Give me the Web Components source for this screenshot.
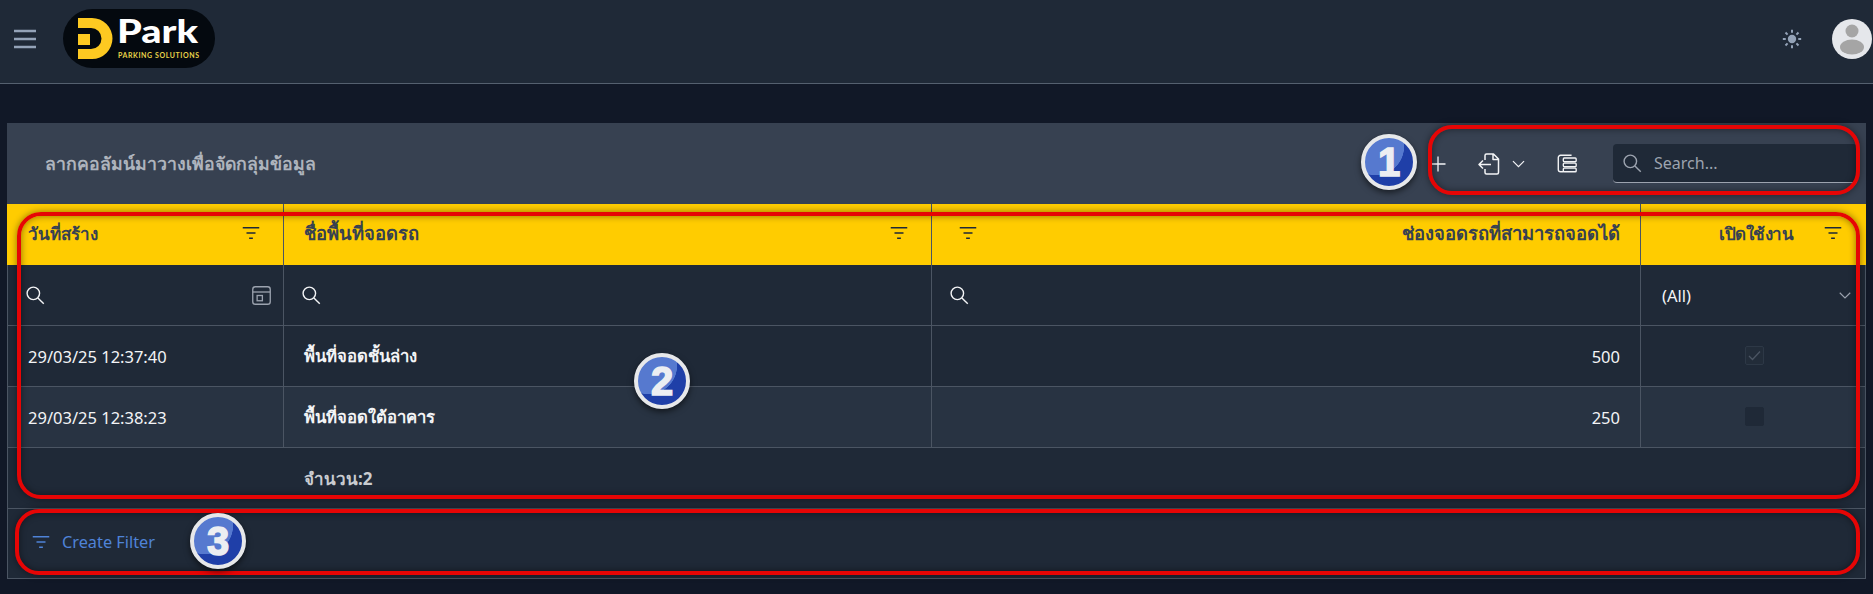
<!DOCTYPE html>
<html lang="th">
<head>
<meta charset="utf-8">
<title>DPark</title>
<style>
  html, body { margin: 0; background: #111827; }
  body {
    font-family: "Noto Sans", "Open Sans", sans-serif;
    font-size: 16.5px;
    color: #f3f4f6;
    width: 1873px;
    height: 594px;
    overflow: hidden;
    position: relative;
  }
  main { display: block; padding: 39px 7px 0; }
  b { font-size: 16.7px; }
  b.total { font-size: 17px; color: #c9ccd1; }
  .search { margin-left: -3px; }
  .wide { font-size: 18.4px; }
  .narrow { font-size: 17px; letter-spacing: -0.5px; }
</style>
</head>
<body>
<app-header></app-header>
<main>
  <grid-panel>
    <grid-toolbar></grid-toolbar>
    <grid-row kind="head">
      <grid-cell kind="head"><span>วันที่สร้าง</span><ui-icon name="filter" slot="end"></ui-icon></grid-cell>
      <grid-cell kind="head"><span class="wide">ชื่อพื้นที่จอดรถ</span><ui-icon name="filter" slot="end"></ui-icon></grid-cell>
      <grid-cell kind="head" style="padding-left:27px;padding-right:20px"><ui-icon name="filter"></ui-icon><span class="wide" slot="end">ช่องจอดรถที่สามารถจอดได้</span></grid-cell>
      <grid-cell kind="head" align="end"><span class="narrow">เปิดใช้งาน</span><ui-icon name="filter" slot="end"></ui-icon></grid-cell>
    </grid-row>
    <grid-row>
      <grid-cell style="padding-right:11px"><ui-icon class="search" name="search"></ui-icon><ui-icon name="calendar" slot="end" style="color:#9ca3af"></ui-icon></grid-cell>
      <grid-cell><ui-icon class="search" name="search"></ui-icon></grid-cell>
      <grid-cell><ui-icon class="search" name="search"></ui-icon></grid-cell>
      <grid-cell style="padding-right:12px"><span>(All)</span><ui-icon name="chevron" size="18" slot="end" style="color:#9ca3af"></ui-icon></grid-cell>
    </grid-row>
    <grid-row>
      <grid-cell>29/03/25 12:37:40</grid-cell>
      <grid-cell><b>พื้นที่จอดชั้นล่าง</b></grid-cell>
      <grid-cell align="end">500</grid-cell>
      <grid-cell align="center"><grid-check checked></grid-check></grid-cell>
    </grid-row>
    <grid-row alt>
      <grid-cell>29/03/25 12:38:23</grid-cell>
      <grid-cell><b>พื้นที่จอดใต้อาคาร</b></grid-cell>
      <grid-cell align="end">250</grid-cell>
      <grid-cell align="center"><grid-check></grid-check></grid-cell>
    </grid-row>
    <grid-row kind="foot">
      <grid-cell plain></grid-cell>
      <grid-cell plain><b class="total">จำนวน:2</b></grid-cell>
      <grid-cell plain></grid-cell>
      <grid-cell plain></grid-cell>
    </grid-row>
    <filter-bar></filter-bar>
  </grid-panel>
</main>

<mark-box style="left:1428px;top:125px;width:432px;height:70px"></mark-box>
<mark-box style="left:17px;top:212px;width:1843px;height:287px"></mark-box>
<mark-box style="left:15px;top:509px;width:1845px;height:66px"></mark-box>
<num-badge style="left:1361px;top:134px">1</num-badge>
<num-badge style="left:634px;top:353px">2</num-badge>
<num-badge style="left:190px;top:513px">3</num-badge>

<script>
const ICONS = {
  menu: '<path d="M0 4h22M0 12h22M0 20h22" stroke="#94a3b8" stroke-width="2.4" fill="none"/>',
  plus: '<path d="M12 3v18M3 12h18" stroke="#f3f4f6" stroke-width="1.6" fill="none"/>',
  exportFile: '<path d="M8 8V3.500a1.500 1.500 0 0 1 1.500-1.500h7l5 5v13.500a1.500 1.500 0 0 1-1.500 1.500h-10.500a1.500 1.500 0 0 1-1.500-1.500v-3.500M16 2v5.500h5.500M14 12.500h-12M6 8.500l-4 4 4 4" stroke="#f3f4f6" stroke-width="1.500" fill="none" stroke-linejoin="round"/>',
  chevron: '<path d="M5 9l7 7 7-7" stroke="currentColor" stroke-width="1.500" fill="none"/>',
  chooser: '<path d="M17 2.500H5a2.500 2.500 0 0 0-2.500 2.500v13a2.500 2.500 0 0 0 2.500 2.500h3" stroke="#f3f4f6" stroke-width="1.500" fill="none"/><rect x="8" y="5.500" width="14" height="4" rx="1" stroke="#f3f4f6" stroke-width="1.500" fill="none"/><rect x="8" y="11" width="14" height="4" rx="1" stroke="#f3f4f6" stroke-width="1.500" fill="none"/><rect x="8" y="16.500" width="14" height="4" rx="1" stroke="#f3f4f6" stroke-width="1.500" fill="none"/>',
  search: '<circle cx="10" cy="10" r="7.500" stroke="currentColor" stroke-width="1.700" fill="none"/><path d="M15.500 15.500L22.500 22.500" stroke="currentColor" stroke-width="1.700"/>',
  filter: '<path d="M1 5h22M6 12h12M9.500 19h5" stroke="currentColor" stroke-width="2" fill="none"/>',
  calendar: '<rect x="2" y="2" width="20" height="20" rx="3" stroke="currentColor" stroke-width="1.500" fill="none"/><path d="M2 8h20" stroke="currentColor" stroke-width="1.500"/><rect x="7" y="12" width="6" height="6" stroke="currentColor" stroke-width="1.500" fill="none"/>',
  sun: '<circle cx="12" cy="12" r="5" fill="#94a3b8"/><path d="M12 1v3.500M12 19.500v3.500M1 12h3.500M19.500 12h3.500M4.200 4.200l2.500 2.500M17.300 17.300l2.500 2.500M4.200 19.800l2.500-2.500M17.300 6.700l2.500-2.500" stroke="#94a3b8" stroke-width="2.400"/>'
};

const SIZES = { menu: 24, plus: 20, exportFile: 24, chevron: 19, chooser: 22, search: 20, filter: 18, calendar: 21, sun: 20 };

class UiIcon extends HTMLElement {
  connectedCallback() {
    const name = this.getAttribute("name");
    const size = this.getAttribute("size") || SIZES[name];
    this.attachShadow({ mode: "open" }).innerHTML = `
      <style>
        :host { display: inline-flex; flex: none; line-height: 0; }
      </style>
      <svg width="${size}" height="${size}" viewBox="0 0 24 24">${ICONS[name]}</svg>`;
  }
}
customElements.define("ui-icon", UiIcon);

class DparkLogo extends HTMLElement {
  constructor() {
    super();
    this.attachShadow({ mode: "open" }).innerHTML = `
      <style>
        :host { display: block; width: 152px; height: 59px; line-height: 0; }
      </style>
      <svg width="152" height="59" viewBox="0 0 152 59">
        <rect width="152" height="59" rx="29.500" fill="#04090f"/>
        <path fill-rule="evenodd" fill="#fdc921" d="M15 9h14a20.500 20.500 0 0 1 0 41H15V40h13a10.500 10.500 0 0 0 0-21H15zM15 25h12v11H15z"/>
        <text x="54" y="34" font-family="Lato, 'Open Sans', sans-serif" font-weight="900" font-size="33" fill="#fff" textLength="81" lengthAdjust="spacingAndGlyphs">Park</text>
        <text x="55" y="49" font-family="Lato, 'Open Sans', sans-serif" font-weight="700" font-size="7" fill="#e8d34a" textLength="81">PARKING SOLUTIONS</text>
      </svg>`;
  }
}
customElements.define("dpark-logo", DparkLogo);

class AppHeader extends HTMLElement {
  constructor() {
    super();
    this.attachShadow({ mode: "open" }).innerHTML = `
      <style>
        :host {
          display: flex;
          align-items: center;
          box-sizing: border-box;
          height: 84px;
          padding: 0 1px 6px 14px;
          background: #1f2937;
          border-bottom: 1px solid #55606f;
        }
        .menu { margin-right: 25px; }
        .grow { flex: 1; }
        .sun { margin-right: 30px; }
        .avatar { width: 40px; height: 40px; }
      </style>
      <ui-icon class="menu" name="menu"></ui-icon>
      <dpark-logo></dpark-logo>
      <div class="grow"></div>
      <ui-icon class="sun" name="sun"></ui-icon>
      <svg class="avatar" viewBox="0 0 40 40">
        <circle cx="20" cy="20" r="20" fill="#e5e7eb"/>
        <circle cx="20" cy="12" r="6.500" fill="#a5a5a5"/>
        <ellipse cx="20" cy="28" rx="12" ry="7.500" fill="#a5a5a5"/>
      </svg>`;
  }
}
customElements.define("app-header", AppHeader);

class GridPanel extends HTMLElement {
  constructor() {
    super();
    this.attachShadow({ mode: "open" }).innerHTML = `
      <style>
        :host { display: block; --cols: 277px 648px 709px 225px; }
      </style>
      <slot></slot>`;
  }
}
customElements.define("grid-panel", GridPanel);

class GridToolbar extends HTMLElement {
  constructor() {
    super();
    this.attachShadow({ mode: "open" }).innerHTML = `
      <style>
        :host {
          display: flex;
          align-items: center;
          box-sizing: border-box;
          height: 81px;
          padding: 0 9px 0 38px;
          background: #374151;
        }
        .hint { flex: 1; font-weight: 700; color: #aeb4bd; font-size: 17.700px; }
        .plus { margin-right: 29px; }
        .export { margin-right: 8px; }
        .chev { color: #f3f4f6; margin-right: 28px; }
        .chooser { margin-right: 35px; }
        .search {
          display: flex;
          align-items: center;
          gap: 12px;
          box-sizing: border-box;
          width: 244px;
          height: 39px;
          padding: 0 9px;
          background: #1f2937;
          border-bottom: 1px solid #9ca3af;
          border-radius: 4px 4px 0 4px;
          color: #9ca3af;
          font-size: 16px;
        }
      </style>
      <div class="hint">ลากคอลัมน์มาวางเพื่อจัดกลุ่มข้อมูล</div>
      <ui-icon class="plus" name="plus"></ui-icon>
      <ui-icon class="export" name="exportFile"></ui-icon>
      <ui-icon class="chev" name="chevron"></ui-icon>
      <ui-icon class="chooser" name="chooser"></ui-icon>
      <div class="search"><ui-icon name="search"></ui-icon><span>Search...</span></div>`;
  }
}
customElements.define("grid-toolbar", GridToolbar);

class GridRow extends HTMLElement {
  constructor() {
    super();
    this.attachShadow({ mode: "open" }).innerHTML = `
      <style>
        :host {
          display: grid;
          grid-template-columns: var(--cols);
          height: 61px;
          box-sizing: border-box;
          background: #1f2937;
          border-bottom: 1px solid #4b5563;
          box-shadow: inset 1px 0 0 #4b5563, inset -1px 0 0 #4b5563;
        }
        :host([alt]) { background: #283342; }
        :host([kind="head"]) { background: #ffcc00; border-bottom: none; box-shadow: none; color: #374151; }
      </style>
      <slot></slot>`;
  }
}
customElements.define("grid-row", GridRow);

class GridCell extends HTMLElement {
  constructor() {
    super();
    this.attachShadow({ mode: "open" }).innerHTML = `
      <style>
        :host {
          display: flex;
          align-items: center;
          justify-content: space-between;
          box-sizing: border-box;
          min-width: 0;
          padding: 0 20px 0 20px;
          border-right: 1px solid #4b5563;
          white-space: nowrap;
        }
        :host(:first-child) { padding-left: 21px; }
        :host(:last-child) { border-right: none; padding-left: 21px; }
        :host([plain]) { border-right: none; }
        :host([kind="head"]) { font-weight: 700; font-size: 17px; color: #374151; padding-right: 23px; padding-bottom: 3px; }
        :host([kind="head"]:last-child) { padding-right: 24px; }
        :host([kind="head"]) ::slotted(ui-icon) { color: #1f2937; }
        :host([align="end"]) { justify-content: flex-end; }
        :host([align="center"]) { justify-content: center; padding: 0 0 2px 1px; }
        .main { display: flex; align-items: center; min-width: 0; }
        .end { display: flex; align-items: center; }
        :host([align="end"][kind="head"]) .end { margin-left: 31px; }
      </style>
      <div class="main"><slot></slot></div>
      <div class="end"><slot name="end"></slot></div>`;
  }
}
customElements.define("grid-cell", GridCell);

class GridCheck extends HTMLElement {
  connectedCallback() {
    const on = this.hasAttribute("checked");
    this.attachShadow({ mode: "open" }).innerHTML = `
      <style>
        :host {
          display: block;
          width: 19px;
          height: 19px;
          box-sizing: border-box;
          border-radius: 2px;
          line-height: 0;
          background: ${on ? "#222c39" : "#1f2937"};
          border: 1px solid ${on ? "#2d3846" : "#1f2937"};
        }
      </style>
      ${on ? '<svg width="17" height="17" viewBox="0 0 17 17"><path d="M3 9l3.500 3.500L14 4.500" stroke="#4b5563" stroke-width="1.300" fill="none"/></svg>' : ""}`;
  }
}
customElements.define("grid-check", GridCheck);

class FilterBar extends HTMLElement {
  constructor() {
    super();
    this.attachShadow({ mode: "open" }).innerHTML = `
      <style>
        :host {
          display: flex;
          align-items: center;
          gap: 12px;
          box-sizing: border-box;
          height: 70px;
          padding: 0 0 4px 24px;
          background: #1f2937;
          border-left: 1px solid #4b5563;
          border-right: 1px solid #4b5563;
          border-bottom: 1px solid #4b5563;
          color: #4f83d8;
          font-size: 16.300px;
        }
      </style>
      <ui-icon name="filter"></ui-icon><span>Create Filter</span>`;
  }
}
customElements.define("filter-bar", FilterBar);

class MarkBox extends HTMLElement {
  constructor() {
    super();
    this.attachShadow({ mode: "open" }).innerHTML = `
      <style>
        :host {
          position: absolute;
          box-sizing: border-box;
          border: 4px solid #e60505;
          border-radius: 24px;
          box-shadow: 0 0 7px rgba(0,0,0,.45), inset 0 0 7px rgba(0,0,0,.45);
          pointer-events: none;
        }
      </style>`;
  }
}
customElements.define("mark-box", MarkBox);

class NumBadge extends HTMLElement {
  constructor() {
    super();
    this.attachShadow({ mode: "open" }).innerHTML = `
      <style>
        :host {
          position: absolute;
          display: flex;
          align-items: center;
          justify-content: center;
          box-sizing: border-box;
          width: 56px;
          height: 56px;
          border-radius: 50%;
          border: 4px solid #e7e8ea;
          background:
            radial-gradient(circle at 22% 18%, #5679cf 0 52%, transparent 53%),
            radial-gradient(circle at 50% 50%, #1f3fa8 0 100%);
          box-shadow: 0 3px 6px rgba(0,0,0,.55);
          color: #eceef2;
          font: 700 40px/1 "Liberation Sans", sans-serif;
          -webkit-text-stroke: 1.500px #eceef2;
        }
      </style>
      <slot></slot>`;
  }
}
customElements.define("num-badge", NumBadge);
</script>
</body>
</html>
